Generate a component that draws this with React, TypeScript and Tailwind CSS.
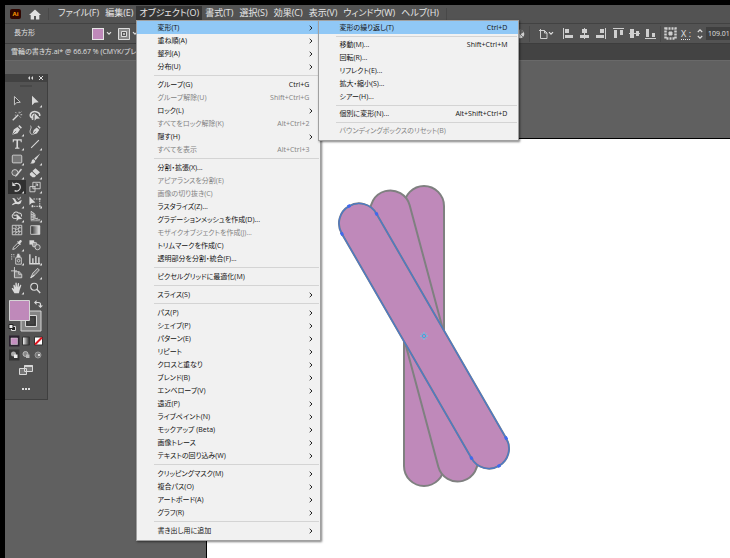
import type { ReactNode } from "react";

type MenuEntry = {
    label: string;
    shortcut?: string;
    sub?: boolean;
    disabled?: boolean;
    active?: boolean;
};

const menus = ["ファイル(F)", "編集(E)", "オブジェクト(O)", "書式(T)", "選択(S)", "効果(C)", "表示(V)", "ウィンドウ(W)", "ヘルプ(H)"];

const objectMenu: MenuEntry[][] = [
    [
        { label: "変形(T)", sub: true, active: true },
        { label: "重ね順(A)", sub: true },
        { label: "整列(A)", sub: true },
        { label: "分布(U)", sub: true },
    ],
    [
        { label: "グループ(G)", shortcut: "Ctrl+G" },
        { label: "グループ解除(U)", shortcut: "Shift+Ctrl+G", disabled: true },
        { label: "ロック(L)", sub: true },
        { label: "すべてをロック解除(K)", shortcut: "Alt+Ctrl+2", disabled: true },
        { label: "隠す(H)", sub: true },
        { label: "すべてを表示", shortcut: "Alt+Ctrl+3", disabled: true },
    ],
    [
        { label: "分割・拡張(X)..." },
        { label: "アピアランスを分割(E)", disabled: true },
        { label: "画像の切り抜き(C)", disabled: true },
        { label: "ラスタライズ(Z)..." },
        { label: "グラデーションメッシュを作成(D)..." },
        { label: "モザイクオブジェクトを作成(J)...", disabled: true },
        { label: "トリムマークを作成(C)" },
        { label: "透明部分を分割・統合(F)..." },
    ],
    [{ label: "ピクセルグリッドに最適化(M)" }],
    [{ label: "スライス(S)", sub: true }],
    [
        { label: "パス(P)", sub: true },
        { label: "シェイプ(P)", sub: true },
        { label: "パターン(E)", sub: true },
        { label: "リピート", sub: true },
        { label: "クロスと重なり", sub: true },
        { label: "ブレンド(B)", sub: true },
        { label: "エンベロープ(V)", sub: true },
        { label: "遠近(P)", sub: true },
        { label: "ライブペイント(N)", sub: true },
        { label: "モックアップ (Beta)", sub: true },
        { label: "画像トレース", sub: true },
        { label: "テキストの回り込み(W)", sub: true },
    ],
    [
        { label: "クリッピングマスク(M)", sub: true },
        { label: "複合パス(O)", sub: true },
        { label: "アートボード(A)", sub: true },
        { label: "グラフ(R)", sub: true },
    ],
    [{ label: "書き出し用に追加", sub: true }],
];

const transformMenu: MenuEntry[][] = [
    [{ label: "変形の繰り返し(T)", shortcut: "Ctrl+D", active: true }],
    [
        { label: "移動(M)...", shortcut: "Shift+Ctrl+M" },
        { label: "回転(R)..." },
        { label: "リフレクト(E)..." },
        { label: "拡大・縮小(S)..." },
        { label: "シアー(H)..." },
    ],
    [{ label: "個別に変形(N)...", shortcut: "Alt+Shift+Ctrl+D" }],
    [{ label: "バウンディングボックスのリセット(B)", disabled: true }],
];

function Menu({ groups, label, dense }: { groups: MenuEntry[][]; label: string; dense?: boolean }) {
    return (
        <div role="menu" aria-label={label} className="border border-[#a0a0a0] bg-[#f1f1f1] pb-[3px] text-[7px] text-[#111] shadow-[1px_1px_2px_rgba(0,0,0,0.5)]">
            {groups.map((group, i) => (
                <div key={i}>
                    {i > 0 && (
                        <div className={`mr-px ml-[17px] pt-0.5 ${dense ? "pb-px" : "pb-0.5"}`}>
                            <div className="h-px bg-[#d4d4d4]" />
                        </div>
                    )}
                    {group.map((item) => (
                        <button
                            key={item.label}
                            role="menuitem"
                            disabled={item.disabled}
                            className={`flex h-[13px] w-full items-center justify-between pl-5 leading-[13px] whitespace-nowrap ${item.sub ? "pr-[7px]" : "pr-[11px]"} ${item.active ? "bg-[#90c8f6]" : ""} ${item.disabled ? "text-[#838383]" : ""}`}
                        >
                            <span>{item.label}</span>
                            {item.shortcut && <span>{item.shortcut}</span>}
                            {item.sub && (
                                <svg width="4" height="6" viewBox="0 0 4 6" fill="none" stroke="#222" strokeWidth="1">
                                    <path d="M.7.8 3 3 .7 5.2" />
                                </svg>
                            )}
                        </button>
                    ))}
                </div>
            ))}
        </div>
    );
}

const L = "#d9d9d9";

const tools: { name: string; icon: ReactNode; corner?: boolean; active?: boolean }[] = [
    { name: "選択", icon: <path d="M4 1.8v9.6l2.6-2.5 4.2-.5z" fill="#444" stroke={L} /> },
    { name: "ダイレクト選択", corner: true, icon: <path d="M3.5 1v11l3-3 4.800-.5z" fill={L} /> },
    {
        name: "自動選択",
        icon: <><path d="M2 12 8.5 5.5" stroke={L} strokeWidth="1.6" /><path d="M9.5 2v2M11 5.5h2M5.2 2.5l1.2 1.2M11 3l1-1M10 7.5l1.2 1.2M4.5 6h1" stroke={L} /></>,
    },
    {
        name: "なげなわ",
        icon: <><path d="M4.5 9.5C2.300 9 1.200 7.500 1.500 5.500 2 3 5 1.500 8 2s4.800 2.500 4.500 5M4.500 9.500C3.500 8 4 5.500 6 5M4.500 9.500l-.5 2" fill="none" stroke={L} strokeWidth="1.8" /><path d="M6.5 3.500v9l2.200-2.200 4-.3z" fill={L} /></>,
    },
    {
        name: "ペン",
        corner: true,
        icon: <><path d="M1.5 12.5 3.200 6.500 7.500 3.500l3 3-3 4.300z" fill={L} /><path d="m8.500 2.500 1.200-1.300 3 3-1.300 1.200z" fill={L} /><path d="m2 12 4-4" stroke="#535353" strokeWidth=".8" /></>,
    },
    {
        name: "曲線",
        icon: <><path d="M4 12.5 5.500 7 9 4l3 3-3 4z" fill={L} /><path d="m9.800 3 1-1.300 2.700 2.800-1.200 1z" fill={L} /><path d="M1.500 2c2.500 1.500-.5 4.500-.3 7 .1 2 1.300 3 2.800 3.300" fill="none" stroke={L} /><path d="m4.500 12 3.500-4" stroke="#535353" strokeWidth=".8" /></>,
    },
    { name: "文字", corner: true, icon: <path d="M2 1.500h10.500v3.300h-1l-.5-1.800H8.200v8l1.600.4v1H4.700v-1l1.600-.4V3H3.500L3 4.800H2z" fill={L} /> },
    { name: "直線", corner: true, icon: <path d="m2.500 11.500 9-9" stroke={L} strokeWidth="1.200" /> },
    { name: "長方形", corner: true, icon: <rect x="1.500" y="2.500" width="11" height="9" rx="1" fill="#777" stroke={L} /> },
    {
        name: "ブラシ",
        corner: true,
        icon: <><path d="M13 .5 6 6.500l1.800 2z" fill={L} /><path d="M5.500 7.200c-2 0-2.200 1.300-2.500 3-.2.900-.8 1.500-1.700 1.800 3 .8 6-.3 6-2.800z" fill={L} /></>,
    },
    {
        name: "Shaper",
        corner: true,
        icon: <><circle cx="4.500" cy="6.500" r="3.500" fill="#666" stroke={L} /><path d="m13 3-6 7.500L4.500 12l.8-2.800L11.500 1.800z" fill={L} stroke="#535353" strokeWidth=".3" /></>,
    },
    { name: "消しゴム", corner: true, icon: <><path d="M7.500 1.500 12.800 6 9 9.500 4 4.700z" fill={L} /><path d="m3.300 5.500 5 4.700L6.500 12H4L1 9.300V7.600z" fill={L} /></> },
    { name: "回転", corner: true, active: true, icon: <><path d="M4 3.400a4.500 4.500 0 1 1 .2 7.800" fill="none" stroke={L} strokeWidth="1.400" /><path d="M1.500 1.300v4.500h4.300z" fill={L} /></> },
    {
        name: "拡大・縮小",
        corner: true,
        icon: <g fill="none" stroke={L}><path d="M4.500 1.500h8.500v7.500H4.500zM1 6.500h6v6H1z" /><path d="m6 7.500 4-4M7.500 3.500H10V6" /></g>,
    },
    {
        name: "線幅",
        corner: true,
        icon: <><path d="M1.500 2.500c1.500-.8 3.500.3 4 2s1.500 3 3 2.500 2-2.500 4.500-2c-1.500.8-.5 2-1.800 3.500-1.700 1.800-4.700.8-6.200.8s-2 1.500-4 1.500c.5-2 2-2.500 3.500-3C4 6 3 4.500 1.500 2.500z" fill={L} /><path d="m7.500 2 1.500 2.500M11 1l-1 3" stroke={L} /></>,
    },
    {
        name: "自由変形",
        corner: true,
        icon: <><path d="M.5.500v10L3.200 8 7.500 7.500z" fill={L} /><path d="M5 3.500h7.500V12H4V10" fill="none" stroke={L} strokeDasharray="2 1" /><path d="M11.500 2.500h2v2h-2zM11.500 11h2v2h-2zM3 11h2v2H3z" fill={L} /></>,
    },
    {
        name: "シェイプ形成",
        corner: true,
        icon: <><path d="M3 9.500C.8 8.500.8 5.500 3 4.500c.5-2.200 4-3 5.500-1C11 3 13 5 12 7.500M3 9.500l3.500.5M3 6h4" fill="none" stroke={L} strokeWidth="1.200" /><path d="M6.500 4.500v8.500l2.200-2.200 4.300-.3z" fill={L} /></>,
    },
    {
        name: "遠近グリッド",
        corner: true,
        icon: <g fill="none" stroke={L}><path d="M2.500 1.500v10l8-2M2.500 1.500 7 5v5.300M2.500 5 7 6.500M2.500 8 7 8.200M4.800 3.200v7.800" /><path d="M2 12.500h11M8 11.500l5-.5" strokeWidth=".7" /></g>,
    },
    {
        name: "メッシュ",
        icon: <><path d="M1.500 1.500h11v11h-11z" fill="#555" stroke={L} /><path d="M2 5.500C5 3.500 5 8 8 5.500s3-.5 4-1M2 9.500c3-2 4 1.500 6-.5s3 .5 4-.5M5.500 2c2 3-2 4 0 6s-1 3 0 4M9 2c2 3-2 4 0 6s-1 3 0 4" fill="none" stroke={L} /></>,
    },
    {
        name: "グラデーション",
        icon: <><defs><linearGradient id="toolGradient"><stop stopColor="#222" /><stop offset="1" stopColor="#eee" /></linearGradient></defs><path d="M2 2h10.500v10H2z" fill="url(#toolGradient)" stroke={L} /></>,
    },
    {
        name: "スポイト",
        corner: true,
        icon: <><path d="M2 12.200 3 9.500l5-5 1.800 1.800-5 5z" fill="none" stroke={L} /><path d="m7 3.300 1-.8.8.7 1.500-1.700c1.300-1 3 .7 2 2L10.700 5l.8 1-.9.900z" fill={L} /></>,
    },
    {
        name: "ブレンド",
        icon: <><path d="M.5 1.500H6v5H.5z" fill={L} /><rect x="4" y="4" width="5" height="5" rx="1.500" fill="#999" stroke={L} /><circle cx="10" cy="9.500" r="3" fill="#606060" stroke={L} /></>,
    },
    {
        name: "シンボルスプレー",
        corner: true,
        icon: <><path d="M0 2h1.500M2.500 2H4M0 4.500h1.500M3 4.500h1M0 7h1.500" stroke={L} /><path d="M5.500 5.500H12v7.500H5.500z" fill="none" stroke={L} /><path d="M6.500 3h4.500v2H6.500zM7.300 1h2.500v2H7.300z" fill={L} /><circle cx="8.800" cy="9" r="1.500" fill="none" stroke={L} /></>,
    },
    { name: "棒グラフ", corner: true, icon: <path d="M1 1.500v11h12M4.500 12V6M8 12V3.500M11.500 12V5" fill="none" stroke={L} strokeWidth="1.600" /> },
    { name: "アートボード", icon: <><path d="M4 0v12M0 4.500h7" stroke={L} /><path d="M4 5.500h5.500L12.500 8.500v4H4z" fill="#777" stroke={L} /><path d="M9 5.500V8.500h3" fill="none" stroke={L} /></> },
    { name: "スライス", corner: true, icon: <><path d="M2 12.500 4.500 7 10 1.500l2 2L7 9z" fill="#777" stroke={L} /><path d="m2 12.500 4-3" stroke={L} strokeWidth="1.500" /></> },
    {
        name: "手のひら",
        corner: true,
        icon: <path d="M4 13 1 8.200c-.5-1 .8-1.500 1.400-.8l1.200 1L2.700 4c0-1 1.400-1.100 1.600-.2L5.200 6l-.1-4.500c0-1.100 1.500-1.100 1.600 0l.4 4.500.9-4.200c.2-.9 1.500-.7 1.400.2L9 6.500l1.500-2.800c.5-.8 1.700-.3 1.400.6L10.200 9l-1 4z" fill={L} />,
    },
    { name: "ズーム", icon: <><circle cx="6" cy="5.500" r="4" fill="#4b4b4b" stroke={L} strokeWidth="1.200" /><path d="m9 8.500 4 4.300" stroke={L} strokeWidth="1.600" /></> },
];

const alignIcons: { name: string; path: string }[] = [
    { name: "左に整列", path: "M1 1h1v11H1zM3 2h4v4H3zM3 8h8v3H3z" },
    { name: "水平方向中央に整列", path: "M6 1h1v11H6zM4 2h5v4H4zM2 8h9v3H2z" },
    { name: "右に整列", path: "M11 1h1v11h-1zM6 2h4v4H6zM2 8h8v3H2z" },
    { name: "上に整列", path: "M1 1h11v1H1zM2 3h3v8H2zM8 3h3v5H8z" },
    { name: "垂直方向中央に整列", path: "M1 6h11v1H1zM2 2h4v9H2zM8 4h3v5H8z" },
    { name: "下に整列", path: "M1 11h11v1H1zM2 2h3v8H2zM8 6h3v4H8z" },
];

function Chevron() {
    return (
        <svg width="6" height="5" viewBox="0 0 6 5" fill="none" stroke="#e0e0e0" strokeWidth="1.2">
            <path d="m1 1.200 2 2 2-2" />
        </svg>
    );
}

function MenuBar() {
    return (
        <header className="flex h-[18px] items-center bg-[#535353] text-[9px] text-[#e6e6e6]">
            <svg className="ml-[5px] shrink-0" width="11" height="10" viewBox="0 0 11 10">
                <rect width="11" height="10" rx="2" fill="#2e0500" />
                <text x="5.500" y="7.300" textAnchor="middle" fontSize="6" fontWeight="700" fill="#ff9a00">Ai</text>
            </svg>
            <button aria-label="ホーム" className="ml-2 shrink-0">
                <svg width="12" height="11" viewBox="0 0 12 11" fill="#e0e0e0">
                    <path d="M6 .5 0 6h1.700v4.500H5V7h2v3.500h3.300V6H12z" />
                </svg>
            </button>
            <div className="ml-[7px] h-3 w-px shrink-0 bg-[#484848]" />
            <nav className="ml-1.5 flex h-full">
                {menus.map((m, i) => (
                    <div key={m} className="relative">
                        <button className={`mt-px h-[14px] px-[3px] leading-[14px] whitespace-nowrap ${i === 2 ? "bg-[#353535]" : ""}`}>{m}</button>
                        {i === 2 && (
                            <div className="absolute top-[15px] left-0 z-10 w-[185px]">
                                <Menu groups={objectMenu} label="オブジェクト" />
                                <div className="absolute top-0 left-[182px] w-[201px]">
                                    <Menu groups={transformMenu} label="変形" dense />
                                </div>
                            </div>
                        )}
                    </div>
                ))}
            </nav>
            <div className="ml-1 h-3 w-px bg-[#484848]" />
        </header>
    );
}

function ControlBar() {
    return (
        <div className="flex h-5 items-center overflow-hidden border-t border-[#424242] bg-[#535353] text-[8px] text-[#e0e0e0]">
            <span className="w-[78px] shrink-0 pl-[9px] text-[7px]">長方形</span>
            <button aria-label="塗り" className="ml-[9px] flex shrink-0 items-center gap-0.5">
                <span className="size-3 border border-[#e6e6e6] bg-[#bf89ba]" />
                <Chevron />
            </button>
            <button aria-label="線" className="ml-1.5 flex shrink-0 items-center gap-0.5">
                <svg width="12" height="12" viewBox="0 0 12 12" fill="none" stroke="#ddd">
                    <path d="M.5.500h11v11H.5z" fill="#888" />
                    <path d="M3.500 3.500h5v5h-5z" fill="#555" />
                    <path d="M5.500 5.500h1v1h-1z" />
                </svg>
                <Chevron />
            </button>
            <div className="ml-auto flex shrink-0 items-center">
                <svg width="9" height="10" viewBox="0 0 9 10">
                    <circle cx="4" cy="5" r="4.300" fill="#d0d0d0" />
                    <path d="M4 5V1a4 4 0 0 1 3.500 2zM4 5l3 3" fill="#666" stroke="#555" strokeWidth=".7" />
                </svg>
                <div className="mx-1 h-4 w-px bg-[#484848]" />
                <button aria-label="選択範囲を整列" className="ml-1 flex items-center">
                    <svg width="10" height="12" viewBox="0 0 10 12" fill="none" stroke="#cfcfcf">
                        <path d="M2.500 1v9.500H9V5L6.500 2.500H1M6.500 2.500V5H9" />
                    </svg>
                    <Chevron />
                </button>
                <div className="ml-2 flex gap-[3px]">
                    {alignIcons.map((a, i) => (
                        <button key={a.name} aria-label={a.name} className={i === 3 ? "ml-0.5" : ""}>
                            <svg width="13" height="13" viewBox="0 0 13 13" fill="#cfcfcf"><path d={a.path} /></svg>
                        </button>
                    ))}
                </div>
                <div className="mx-[3px] h-4 w-px bg-[#484848]" />
                <svg width="13" height="13" viewBox="0 0 13 13" fill="none" stroke="#d0d0d0">
                    <path d="M1.500 1.500h10v10h-10z" strokeWidth="2.500" strokeDasharray="2 1" />
                    <path d="M5 5h3v3H5z" fill="#d0d0d0" />
                </svg>
                <label htmlFor="posX" className="ml-1 text-[9px] underline decoration-dotted underline-offset-2">X :</label>
                <svg className="ml-1.5" width="6" height="12" viewBox="0 0 6 12" fill="none" stroke="#ddd" strokeWidth="1.2">
                    <path d="M.8 4 3 1.800 5.200 4M.8 8 3 10.200 5.200 8" />
                </svg>
                <input id="posX" defaultValue="109.01" className="ml-[3px] h-[13px] w-6 bg-[#3f3f3f] pl-0.5 text-[7px] outline-none" />
            </div>
        </div>
    );
}

function Toolbox() {
    return (
        <aside className="mt-[13px] w-[43px] shrink-0 self-start border-r border-b border-[#3f3f3f] bg-[#535353] pb-1">
            <div className="flex h-2 items-center justify-end gap-1.5 bg-[#424242] pr-1">
                <svg width="5" height="4" viewBox="0 0 5 4" fill="#ddd"><path d="M2 0v4L0 2zM5 0v4L3 2z" /></svg>
                <svg width="4" height="4" viewBox="0 0 4 4" stroke="#ddd"><path d="m0 0 4 4M4 0 0 4" /></svg>
            </div>
            <div className="mx-auto mt-[3px] h-0.5 w-3 bg-[#484848]" />
            <div className="mt-[7px] grid h-[201px] grid-cols-2 content-stretch px-[3px]">
                {tools.map((t) => (
                    <button key={t.name} aria-label={t.name} className={`grid place-items-center ${t.active ? "bg-[#303030]" : ""}`}>
                        <svg width="14" height="14" viewBox="0 0 14 14" fill="none">
                            <g transform="translate(1 1) scale(0.86)">{t.icon}</g>
                            {t.corner && <path d="M14 11v2.500h-2.500z" fill="#ddd" />}
                        </svg>
                    </button>
                ))}
            </div>
            <svg className="mt-[5px] ml-[3px]" width="35" height="32" viewBox="0 0 35 32" fill="none">
                <path d="M13 11h20v20H13z" fill="#858585" stroke="#d5d5d5" />
                <path d="M17.500 15.500h11v11h-11z" fill="#444" stroke="#d5d5d5" />
                <path d="M19 17h8v8h-8z" fill="#444" stroke="#333" />
                <path d="M1.500.500h20v20h-20z" fill="#bf89ba" stroke="#d5d5d5" />
                <path d="M28 2.500h2.500a2 2 0 0 1 2 2V6" stroke={L} strokeWidth="1.200" />
                <path d="M28.500 0v5L26 2.500zM30 5.500h5L32.500 8z" fill={L} />
                <path d="M3.500 26.500h4v4h-4z" fill="#222" stroke="#ddd" />
                <path d="M1 24.500h4v4H1z" fill="#eee" stroke="#222" />
            </svg>
            <svg className="mt-[3px] ml-[3px]" width="36" height="12" viewBox="0 0 36 12">
                <defs>
                    <linearGradient id="modeGradient"><stop stopColor="#fff" /><stop offset="1" stopColor="#222" /></linearGradient>
                </defs>
                <path d="M1 .5h10.500v11H1z" fill="#2c2230" />
                <path d="M3 3h6.500v6.500H3z" fill="#c58fc0" stroke="#ddd" strokeWidth=".5" />
                <path d="M14.500 2h7v8h-7z" fill="url(#modeGradient)" stroke="#333" />
                <path d="M26.500 2h8v8h-8z" fill="#fff" stroke="#333" />
                <path d="m27 9.500 7-7" stroke="#e0151f" strokeWidth="2" />
            </svg>
            <svg className="mt-0.5 ml-[3px]" width="36" height="12" viewBox="0 0 36 12">
                <path d="M1 .5h10.500v11H1z" fill="#343434" />
                <circle cx="5.500" cy="5" r="2.500" fill="#aaa" />
                <path d="M6 5.500h3.500V9H6z" fill="#eee" />
                <circle cx="17.500" cy="5" r="2.500" fill="#888" stroke="#bbb" />
                <path d="M18 5.500h3.500V9H18z" fill="#bbb" />
                <circle cx="30" cy="6" r="3" fill="#777" stroke="#999" />
                <path d="M30 5h2v2h-2z" fill="#ddd" />
            </svg>
            <button aria-label="スクリーンモード" className="mx-auto mt-1 block">
                <svg width="14" height="10" viewBox="0 0 14 10" fill="#777" stroke={L}>
                    <path d="M.5 3.500h7v6h-7zM5.500.500h8v6h-8z" />
                    <path d="M5 1.200h9" strokeWidth="1.500" />
                </svg>
            </button>
            <button aria-label="ツールバーを編集" className="mx-auto mt-3 mb-1 block">
                <svg width="10" height="4" viewBox="0 0 10 4" fill="#ddd"><path d="M1 1h2v2H1zM4 1h2v2H4zM7 1h2v2H7z" /></svg>
            </button>
        </aside>
    );
}

function Artwork() {
    return (
        <svg className="mt-9 ml-[123px]" width="190" height="320" viewBox="-94 -161 190 320">
            <g fill="#bf89ba" stroke="#7f8080" strokeWidth="2">
                <rect x="-20" y="-150" width="40" height="300" rx="20" />
                <rect x="-20" y="-150" width="40" height="300" rx="20" transform="rotate(-15)" />
                <rect x="-20" y="-150" width="40" height="300" rx="20" transform="rotate(-30)" />
            </g>
            <g transform="rotate(-30)">
                <rect x="-20" y="-150" width="40" height="300" rx="20" fill="none" stroke="#4c79c8" strokeWidth="1.3" />
                {/* corner anchor points */}
                <path d="M-21.500-131h3v3h-3zM18.500-131h3v3h-3zM-1.500-151.500h3v3h-3zM-21.500 128h3v3h-3zM18.500 128h3v3h-3zM-1.500 148.500h3v3h-3z" fill="#3f68ee" />
            </g>
            {/* rotation origin */}
            <circle r="1.800" fill="none" stroke="#3a8fd0" />
            <path d="M-4 0h2.500M1.500 0H4M0-4v2.500M0 1.500V4M-2.500-2.500l1 1M2.500-2.500l-1 1M-2.500 2.500l1-1M2.500 2.500l-1-1" stroke="#62d0f0" strokeWidth="1" />
        </svg>
    );
}

export default function App() {
    return (
        <div lang="ja" className="flex min-h-screen flex-col overflow-hidden bg-black pt-[5px] pl-[5px] font-['Open_Sans','Noto_Sans_CJK_JP',sans-serif] [font-feature-settings:'palt']">
            <MenuBar />
            <ControlBar />
            <div className="flex h-[18px] border-y border-t-[#3d3d3d] border-b-[#696969] bg-[#434343] text-[7px] text-[#e0e0e0]">
                <button className="bg-[#535353] px-1.5 leading-4 whitespace-nowrap">雪輪の書き方.ai* @ 66.67 % (CMYK/プレビ</button>
            </div>
            <main className="flex flex-1 bg-[#606060]">
                <Toolbox />
                <div className="mt-[77px] ml-[158px] flex-1 border-t border-l border-black bg-white">
                    <Artwork />
                </div>
            </main>
        </div>
    );
}
